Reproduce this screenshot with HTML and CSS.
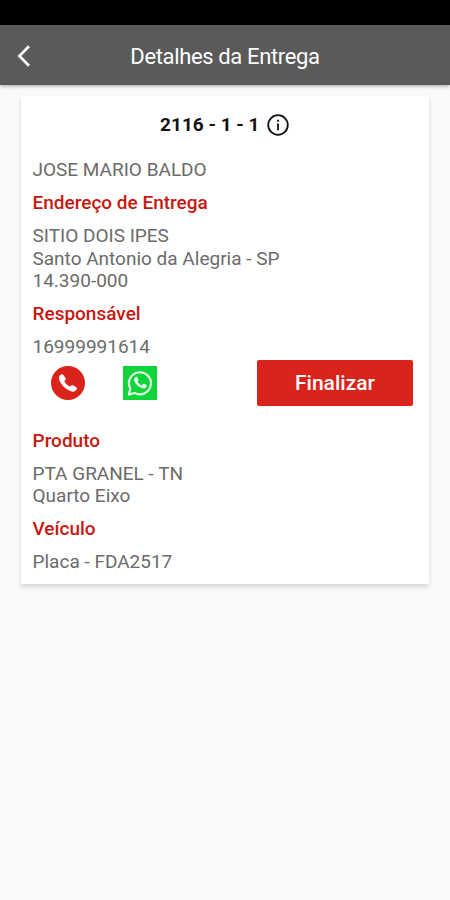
FILE: index.html
```html
<!DOCTYPE html>
<html lang="pt-BR">
<head>
  <meta charset="UTF-8">
  <meta name="viewport" content="width=device-width, initial-scale=1.0">
  <title>Detalhes da Entrega</title>
  <link rel="stylesheet" href="styles.css">
</head>
<body>
  <div class="status-bar"></div>

  <header class="header">
    <button class="voltar" aria-label="Voltar">
      <svg width="14" height="22" viewBox="0 0 14 22" fill="none" stroke="#fff" stroke-width="2.7">
        <path d="M12 1.2 2.4 11 12 20.8"/>
      </svg>
    </button>
    <h1>Detalhes da Entrega</h1>
  </header>

  <main class="card">
    <div class="codigo">
      <span>2116 - 1 - 1</span>
      <svg width="22" height="22" viewBox="0 0 22 22" fill="none" stroke="#111" stroke-width="1.8">
        <circle cx="11" cy="11" r="9.8"/>
        <path d="M11 9.6v6.6M11 5.8v2"/>
      </svg>
    </div>

    <p class="cliente">JOSE MARIO BALDO</p>

    <h2>Endereço de Entrega</h2>
    <p class="endereco">SITIO DOIS IPES</p>
    <p class="cidade">Santo Antonio da Alegria - SP</p>
    <p class="cep">14.390-000</p>

    <h2>Responsável</h2>
    <p class="telefone">16999991614</p>

    <div class="acoes">
      <button class="ligar" aria-label="Ligar">
        <svg width="34" height="34" viewBox="0 0 34 34">
          <circle cx="17" cy="17" r="17" fill="#d9231b"/>
          <path d="M9.2 9.1c1.2-1.3 2.5-1.2 3.4.1l1.8 2.7c.6 1 .4 1.8-.6 2.7-.5.5-.4.9 0 1.5 1.1 1.8 2.6 3.2 4.4 4.2.6.3 1 .3 1.4-.2.8-1.1 1.7-1.3 2.7-.7l2.7 1.7c1.1.7 1.1 1.9.1 3-1.3 1.5-3.2 2-5.2 1.2-5.6-2.1-9.7-6.2-11.7-11.5-.7-1.9-.2-3.500 1-4.700z" fill="#fff"/>
        </svg>
      </button>
      <button class="whatsapp" aria-label="WhatsApp">
        <svg width="34" height="34" viewBox="0 0 34 34">
          <path d="M0 0h34v34H0z" fill="#10d53a"/>
          <path d="M5.800 28.400l1.500-5.800A11 11 0 1 1 11.600 26.900z" fill="none" stroke="#e6ffe9" stroke-width="2.1" stroke-linejoin="round"/>
          <path d="M12.400 11.300c.9-.8 1.700-.6 2.100.3l.9 2.100c.2.500-.2 1.100-.8 1.800.9 1.800 2.200 3 4.200 3.900l1.300-1.400c.3-.3.600-.4 1-.2l2.200 1.100c.6.300.6.8.3 1.500-.7 1.700-2.500 2.400-4.300 1.900-3.900-1.100-6.700-3.700-8-7.200-.5-1.500-.1-2.800 1.100-3.800z" fill="#e6ffe9"/>
        </svg>
      </button>
      <button class="finalizar">Finalizar</button>
    </div>

    <h2>Produto</h2>
    <p class="produto">PTA GRANEL - TN</p>
    <p class="eixo">Quarto Eixo</p>

    <h2>Veículo</h2>
    <p class="placa">Placa - FDA2517</p>
  </main>
</body>
</html>
```
FILE: styles.css
```css
* {
  box-sizing: border-box;
  margin: 0;
  padding: 0;
}

body {
  font-family: Roboto, Arial, sans-serif;
  background: #fafafa;
  color: #6b6b6b;
  min-height: 100vh;
}

button {
  border: none;
  background: none;
  font-family: inherit;
  cursor: pointer;
}

svg {
  display: block;
}

.status-bar {
  height: 25px;
  background: #000;
}

/* Header */
.header {
  display: grid;
  grid-template-columns: 36px 1fr 36px;
  align-items: center;
  height: 60px;
  padding: 2px 0 0;
  background: #5a5a5a;
  box-shadow: 0 1px 4px rgba(0, 0, 0, 0.35);
}

.voltar {
  padding-left: 17px;
}

.header h1 {
  color: #fff;
  font-size: 22px;
  font-weight: 400;
  letter-spacing: -0.36px;
  text-align: center;
}

/* Card */
.card {
  margin: 11px 21px 0;
  padding: 18px 16px 10px 11.5px;
  background: #fff;
  box-shadow: 0 3px 5px rgba(0, 0, 0, 0.15);
  font-size: 19px;
  line-height: 22.3px;
}

.codigo {
  display: flex;
  justify-content: center;
  align-items: center;
  gap: 8px;
  margin-bottom: 23px;
  padding-left: 4px;
  color: #111;
  font-weight: 700;
}

.card h2 {
  margin: 10.7px 0;
  color: #c8170f;
  font-size: 19px;
  font-weight: 500;
}

/* Botões */
.acoes {
  display: flex;
  align-items: center;
  height: 46px;
  margin: 2px 0 24px;
}

.ligar {
  margin-left: 18.5px;
}

.whatsapp {
  margin-left: 38px;
}

.finalizar {
  width: 156px;
  height: 46px;
  margin-left: auto;
  border-radius: 2px;
  background: #d9231b;
  color: #fff;
  font-size: 21px;
  font-weight: 500;
}
```
